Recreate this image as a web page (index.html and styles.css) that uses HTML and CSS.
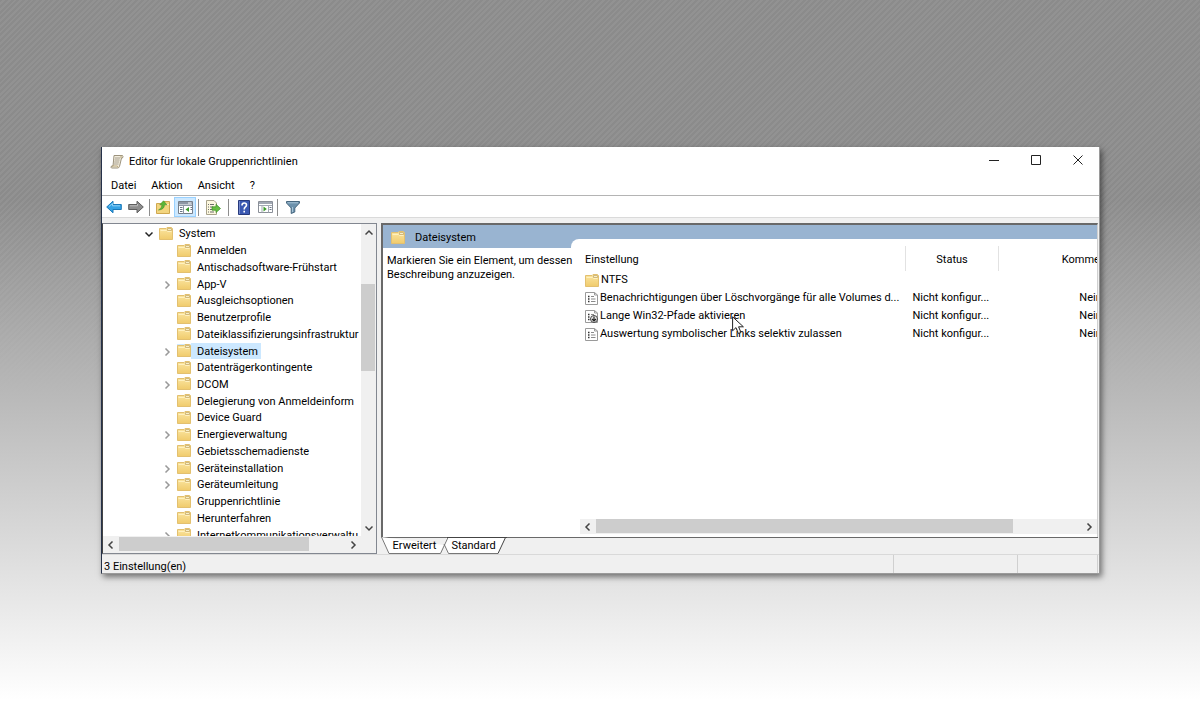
FILE: index.html
```html
<!DOCTYPE html>
<html lang="de">
    <head>
        <meta charset="UTF-8" />
        <title>Editor für lokale Gruppenrichtlinien</title>
        <link rel="stylesheet" href="styles.css">
    </head>

    <body>
        <svg class="defs" width="0" height="0" aria-hidden="true">
            <linearGradient id="folderFill" x1="0" y1="0" x2="0" y2="1">
                <stop offset="0" stop-color="#fbe6a2" />
                <stop offset="1" stop-color="#f0cb6c" />
            </linearGradient>
            <symbol id="folder" viewBox="0 0 14 13">
                <path d="M0.5 1.5H7L8 0.5H12.5L13.5 1.5V12.5H0.5Z" fill="url(#folderFill)" stroke="#e3c06f" />
                <path d="M8.5 3.5V1.5H12.5V3.5Z" fill="#f7efcb" stroke="#c9ad6c" stroke-width="0.8" />
                <path d="M1.5 3.5H7.5L8.5 4.5H12.5" fill="none" stroke="#fff1bf" />
            </symbol>
            <symbol id="setting" viewBox="0 0 13 13">
                <path d="M0.5 0.5H9.5L12.5 3V12.5H0.5Z" fill="#fff" stroke="#9a9a9a" />
                <path d="M9.5 0.5V3H12.5" fill="none" stroke="#9a9a9a" />
                <path d="M3 4.5H4.5M3 7H4.5M3 9.5H4.5" stroke="#333" stroke-width="1.3" />
                <path d="M6 4.5H9M6 7H10.5M6 9.5H10.5" stroke="#8a8a8a" />
            </symbol>
            <symbol id="chevron" viewBox="0 0 8 8">
                <path d="M2.5 0.5L6 4L2.5 7.5" fill="none" stroke="currentColor" stroke-width="1.5" />
            </symbol>
        </svg>

        <main class="window">
            <header class="titlebar">
                <svg class="app_icon" width="14" height="15" viewBox="0 0 14 15">
                    <path d="M4 1.5H12.5Q13.5 2 12.5 4H11.5L9.5 12.5Q9 14 7.5 14H1.5Q0.5 13.5 1.5 12H3Z" fill="#f3eddd" stroke="#9b927d" />
                    <path d="M5 4H10M4.6 6H9.6M4.2 8H9.2M3.8 10H8.6" stroke="#a59e8e" />
                    <path d="M2 12H7.5L8 13.5M11 1.5V4" fill="none" stroke="#b8a77c" />
                </svg>
                <h1>Editor für lokale Gruppenrichtlinien</h1>
                <button class="win_btn" aria-label="Minimieren"><svg width="10" height="10" viewBox="0 0 10 10"><path d="M0 5.5H10" /></svg></button>
                <button class="win_btn" aria-label="Maximieren"><svg width="10" height="10" viewBox="0 0 10 10"><path d="M0.5 0.5H9.5V9.5H0.5Z" /></svg></button>
                <button class="win_btn" aria-label="Schließen"><svg width="10" height="10" viewBox="0 0 10 10"><path d="M0.5 0.5L9.5 9.5M9.5 0.5L0.5 9.5" /></svg></button>
            </header>

            <nav class="menubar">
                <button>Datei</button>
                <button>Aktion</button>
                <button>Ansicht</button>
                <button>?</button>
            </nav>

            <div class="toolbar">
                <button aria-label="Zurück">
                    <svg width="16" height="14" viewBox="0 0 16 14"><path d="M0.7 7L7 1.2V4.5H15.3V9.5H7V12.8Z" fill="#35a2e4" stroke="#1b78b8" /><path d="M3 6.5L6.5 3.5V5.8H14" fill="none" stroke="#8fd2f7" /></svg>
                </button>
                <button aria-label="Vorwärts">
                    <svg width="16" height="14" viewBox="0 0 16 14"><path d="M15.3 7L9 1.2V4.5H0.7V9.5H9V12.8Z" fill="#8d8d8d" stroke="#5e5e5e" /><path d="M2 5.8H9.5V4" fill="none" stroke="#bdbdbd" /></svg>
                </button>
                <span class="divider"></span>
                <button aria-label="Eine Ebene nach oben">
                    <svg width="14" height="14" viewBox="0 0 14 14"><path d="M0.5 3.5H6L8 1.5H13.5V13.5H0.5Z" fill="#f3d57f" stroke="#cfa850" /><path d="M8.5 4.5H13" stroke="#fff0b8" /><path d="M2.5 10Q6 8.5 6 4.8H3.8L7.5 0.8L10.8 4.8H8.4Q8.5 9.5 2.5 10Z" fill="#5cb838" stroke="#3f8f25" stroke-width="0.6" /></svg>
                </button>
                <button class="on" aria-label="Konsolenstruktur anzeigen">
                    <svg width="15" height="13" viewBox="0 0 15 13"><path d="M0.5 0.5H14.5V12.5H0.5Z" fill="#fff" stroke="#777f8a" /><path d="M1 1H14V3.5H1Z" fill="#8d97a5" /><path d="M10 2H13.5" stroke="#fff" /><path d="M1 4.5H14M5.5 4V12.5" stroke="#8d97a5" /><path d="M2 6.5H4.5M2 8.5H4.5M2 10.5H4.5M12.5 6.5H14M12.5 8.5H14" stroke="#6b7686" /><path d="M7.5 8.5L11 6V11Z" fill="#3a9c2a" /></svg>
                </button>
                <span class="divider"></span>
                <button class="wide" aria-label="Liste exportieren">
                    <svg width="15" height="15" viewBox="0 0 15 15"><path d="M0.5 0.5H8L10.5 3V14.5H0.5Z" fill="#fdf8df" stroke="#a9a38b" /><path d="M2 4.5H3M4 4.5H8M2 7H3M4 7H7M2 9.5H3M4 9.5H7M2 12H3M4 12H8" stroke="#6d6d6d" /><path d="M6 6.8H10V4.3L14.5 8.5L10 12.5V10.2H6Z" fill="#67c043" stroke="#3a8c22" stroke-width="0.7" /></svg>
                </button>
                <span class="divider"></span>
                <button class="wide" aria-label="Hilfe">
                    <svg width="12" height="15" viewBox="0 0 12 15"><path d="M0.5 0.5H11.5V14.5H0.5Z" fill="#3a58b2" stroke="#26397c" /><path d="M1.5 1V14" stroke="#7288cd" /><path d="M4 5.5Q4 3 6.2 3Q8.5 3 8.5 5Q8.5 6.3 7.2 7.2Q6.2 8 6.2 9.4M6.2 10.8V12.4" fill="none" stroke="#fff" stroke-width="1.6" /></svg>
                </button>
                <button class="narrow" aria-label="Aktionsbereich anzeigen">
                    <svg width="15" height="12" viewBox="0 0 15 12"><path d="M0.5 0.5H14.5V11.5H0.5Z" fill="#fff" stroke="#8a8f98" /><path d="M1 1H14V3H1Z" fill="#a2a9b4" /><path d="M1 4.5H14M10.5 4V11.5M4 4V11.5" stroke="#a2a9b4" /><path d="M11.5 6.5H13.5M11.5 8.5H13.5" stroke="#6b7686" /><path d="M8.8 8L5.5 5.5V10.5Z" fill="#3a9c2a" /></svg>
                </button>
                <span class="divider"></span>
                <button class="wide" aria-label="Filter">
                    <svg width="14" height="13" viewBox="0 0 14 13"><path d="M0.5 0.5H13.5V2L8.8 7V11L5.2 12.5V7L0.5 2Z" fill="#6d92ad" stroke="#47677f" /><path d="M1.5 1.8H12" stroke="#a9c5d8" /><path d="M6.5 6V11" stroke="#a9c5d8" /></svg>
                </button>
            </div>

            <div class="panes">
                <section class="tree_pane" aria-label="Konsolenstruktur">
                    <div class="tree_view">
                        <ul class="tree">
                            <li class="root"><svg class="arrow open"><use href="#chevron" /></svg><svg class="folder"><use href="#folder" /></svg><span>System</span></li>
                            <li><svg class="folder"><use href="#folder" /></svg><span>Anmelden</span></li>
                            <li><svg class="folder"><use href="#folder" /></svg><span>Antischadsoftware-Frühstart</span></li>
                            <li><svg class="arrow"><use href="#chevron" /></svg><svg class="folder"><use href="#folder" /></svg><span>App-V</span></li>
                            <li><svg class="folder"><use href="#folder" /></svg><span>Ausgleichsoptionen</span></li>
                            <li><svg class="folder"><use href="#folder" /></svg><span>Benutzerprofile</span></li>
                            <li><svg class="folder"><use href="#folder" /></svg><span>Dateiklassifizierungsinfrastruktur</span></li>
                            <li class="on"><svg class="arrow"><use href="#chevron" /></svg><svg class="folder"><use href="#folder" /></svg><span>Dateisystem</span></li>
                            <li><svg class="folder"><use href="#folder" /></svg><span>Datenträgerkontingente</span></li>
                            <li><svg class="arrow"><use href="#chevron" /></svg><svg class="folder"><use href="#folder" /></svg><span>DCOM</span></li>
                            <li><svg class="folder"><use href="#folder" /></svg><span>Delegierung von Anmeldeinform</span></li>
                            <li><svg class="folder"><use href="#folder" /></svg><span>Device Guard</span></li>
                            <li><svg class="arrow"><use href="#chevron" /></svg><svg class="folder"><use href="#folder" /></svg><span>Energieverwaltung</span></li>
                            <li><svg class="folder"><use href="#folder" /></svg><span>Gebietsschemadienste</span></li>
                            <li><svg class="arrow"><use href="#chevron" /></svg><svg class="folder"><use href="#folder" /></svg><span>Geräteinstallation</span></li>
                            <li><svg class="arrow"><use href="#chevron" /></svg><svg class="folder"><use href="#folder" /></svg><span>Geräteumleitung</span></li>
                            <li><svg class="folder"><use href="#folder" /></svg><span>Gruppenrichtlinie</span></li>
                            <li><svg class="folder"><use href="#folder" /></svg><span>Herunterfahren</span></li>
                            <li><svg class="arrow"><use href="#chevron" /></svg><svg class="folder"><use href="#folder" /></svg><span>Internetkommunikationsverwaltu</span></li>
                        </ul>
                    </div>
                    <div class="vscroll">
                        <button aria-label="Nach oben"><svg class="arrow up"><use href="#chevron" /></svg></button>
                        <div class="track"><div class="thumb"></div></div>
                        <button aria-label="Nach unten"><svg class="arrow open"><use href="#chevron" /></svg></button>
                    </div>
                    <div class="hscroll">
                        <button aria-label="Nach links"><svg class="arrow left"><use href="#chevron" /></svg></button>
                        <div class="track"><div class="thumb"></div></div>
                        <button aria-label="Nach rechts"><svg class="arrow"><use href="#chevron" /></svg></button>
                    </div>
                </section>

                <section class="detail_pane">
                    <div class="detail">
                        <div class="banner"><svg class="folder"><use href="#folder" /></svg><h2>Dateisystem</h2></div>
                        <p class="desc">Markieren Sie ein Element, um dessen Beschreibung anzuzeigen.</p>
                        <div class="list">
                            <div class="list_view">
                                <table>
                                    <colgroup><col><col class="col_status"><col class="col_comment"></colgroup>
                                    <thead>
                                        <tr><th>Einstellung</th><th>Status</th><th>Kommentar</th></tr>
                                    </thead>
                                    <tbody>
                                        <tr><td><svg class="folder"><use href="#folder" /></svg>NTFS</td><td></td><td></td></tr>
                                        <tr><td><svg class="setting"><use href="#setting" /></svg>Benachrichtigungen über Löschvorgänge für alle Volumes d...</td><td>Nicht konfigur...</td><td>Nein</td></tr>
                                        <tr><td><svg class="setting"><use href="#setting" /><circle cx="9" cy="9" r="3.5" fill="#eee" stroke="#444" /><path d="M9 6.5V11M7 9L9 11L11 9" fill="none" stroke="#222" stroke-width="1.2" /></svg>Lange Win32-Pfade aktivieren</td><td>Nicht konfigur...</td><td>Nein</td></tr>
                                        <tr><td><svg class="setting"><use href="#setting" /></svg>Auswertung symbolischer Links selektiv zulassen</td><td>Nicht konfigur...</td><td>Nein</td></tr>
                                    </tbody>
                                </table>
                            </div>
                            <div class="hscroll">
                                <button aria-label="Nach links"><svg class="arrow left"><use href="#chevron" /></svg></button>
                                <div class="track"><div class="thumb"></div></div>
                                <button aria-label="Nach rechts"><svg class="arrow"><use href="#chevron" /></svg></button>
                            </div>
                        </div>
                    </div>
                    <div class="tabs">
                        <svg class="tab_lines" width="126" height="18" viewBox="0 0 126 18" aria-hidden="true">
                            <path d="M0 0L8 16.5H59L66 0.5H124L117 16.5H67L62 8Z" fill="#fff" />
                            <path d="M0.5 0L8 16.5H59.5L67 0.5M63 7L67.5 16.5H117" fill="none" stroke="#777" />
                            <path d="M66 0.5H126M117 16.5L124.5 0.5" fill="none" stroke="#444" />
                        </svg>
                        <button>Erweitert</button>
                        <button>Standard</button>
                    </div>
                </section>
            </div>

            <footer class="statusbar">
                <span>3 Einstellung(en)</span>
                <span></span>
                <span></span>
            </footer>

            <svg class="cursor" width="13" height="20" viewBox="0 0 13 20" aria-hidden="true">
                <path d="M0.6 0.8V14.8L4 11.6L6.4 17.6L9 16.5L6.6 10.8H11.4Z" fill="#fff" fill-opacity="0.8" stroke="#222" />
            </svg>
        </main>
    </body>
</html>
```

FILE: styles.css
```css
* {
    box-sizing: border-box;
    padding: 0;
    margin: 0;
}
body {
    min-height: 100vh;
    padding: 147px 100px 100px 101px;
    font: 11px/14px Roboto, "Open Sans", sans-serif;
    color: #000;
    background:
        linear-gradient(transparent 200px, #bababa 400px, #dedede 560px, #fff 700px),
        repeating-linear-gradient(135deg, #8b8b8b 0 2px, #929292 2px 4px);
}
button {
    border: 0;
    background: none;
    font: inherit;
    color: inherit;
    display: flex;
    align-items: center;
    justify-content: center;
}
h1,
h2,
th {
    font-size: 11px;
    font-weight: 400;
}
.defs {
    position: absolute;
}
.window {
    position: relative;
    border: 1px solid #9a9a9a;
    border-width: 0 1px 1px;
    border-left-color: #26324a;
    background-color: #f0f0f0;
    box-shadow: 2px 3px 6px rgba(0, 0, 0, 0.5);
}

/* title and menu */
.titlebar {
    display: flex;
    align-items: center;
    height: 28px;
    padding-left: 8px;
    background-color: #fff;
}
.titlebar h1 {
    flex: 1;
    padding: 1px 0 0 5px;
}
.win_btn {
    align-self: flex-start;
    width: 42px;
    height: 26px;
}
.win_btn path {
    fill: none;
    stroke: #222;
}
.menubar {
    display: flex;
    gap: 15px;
    height: 21px;
    padding: 1px 9px 0;
    background-color: #fff;
    border-bottom: 1px solid #b4b4b4;
}
.toolbar {
    display: flex;
    align-items: center;
    height: 22px;
    padding: 1px 0 0 1px;
    background-color: #fff;
    border-bottom: 1px solid #dadada;
}
.toolbar button {
    width: 22px;
    height: 20px;
}
.toolbar button.wide {
    width: 25px;
}
.toolbar button.narrow {
    width: 19px;
}
.toolbar button.on {
    background-color: #cce8ff;
    border: 1px solid #99d1ff;
}
.divider {
    width: 1px;
    height: 17px;
    margin: 0 2px;
    background-color: #8d8d8d;
}

/* panes */
.panes {
    display: flex;
    gap: 4px;
    padding: 5px 1px 0 0;
}
.folder {
    flex: none;
    width: 14px;
    height: 13px;
}
.arrow {
    width: 8px;
    height: 8px;
}
.arrow.open {
    transform: rotate(90deg);
}
.arrow.up {
    transform: rotate(-90deg);
}
.arrow.left {
    transform: rotate(180deg);
}
.tree_pane {
    display: grid;
    grid-template: 312px 17px / 1fr 15px;
    flex: none;
    width: 275px;
    border: 1px solid #828790;
    border-left-color: #444;
    background-color: #f0f0f0;
}
.tree_view {
    overflow: hidden;
    padding-top: 1px;
    background-color: #fff;
}
.tree {
    display: grid;
    grid-auto-rows: 1fr;
    height: 318px;
    list-style: none;
    white-space: nowrap;
}
.tree li {
    display: flex;
    align-items: center;
    justify-content: flex-start;
    padding-left: 74px;
}
.tree li .arrow {
    flex: none;
    margin: 2px 6px 0 -14px;
    color: #999;
}
.tree li.root {
    padding-left: 56px;
}
.tree li.root .arrow {
    color: #222;
}
.tree span {
    padding: 2px 3px 0 6px;
}
.tree li.on .folder,
.tree li.on span {
    background-color: #cce8ff;
}
.vscroll {
    display: flex;
    flex-direction: column;
    color: #444;
}
.vscroll button {
    height: 17px;
}
.track {
    flex: 1;
}
.thumb {
    background-color: #cdcdcd;
}
.vscroll .thumb {
    width: 14px;
    height: 87px;
    margin-top: 43px;
}
.hscroll {
    display: flex;
    height: 15px;
    background-color: #f0f0f0;
    color: #444;
}
.hscroll button {
    width: 16px;
}
.hscroll .thumb {
    height: 14px;
}
.tree_pane .hscroll {
    align-self: center;
}
.tree_pane .thumb {
    max-width: 190px;
}

/* details */
.detail_pane {
    flex: 1;
    min-width: 0;
}
.detail {
    display: grid;
    grid-template: 14px 9px 289px / 188px 1fr;
    border: 1px solid #d0d0d0;
    border-top: 2px solid #696969;
    border-left: 2px solid #696969;
    border-bottom: 0;
    background-color: #fff;
}
.banner {
    display: flex;
    grid-area: 1 / 1 / 3 / 3;
    align-items: center;
    padding: 2px 0 0 8px;
    background-color: #99b4d1;
}
.banner h2 {
    padding-left: 10px;
}
.desc {
    grid-area: 3 / 1;
    z-index: 1;
    margin-right: -6px;
    padding: 6px 0 0 4px;
}
.list {
    display: flex;
    flex-direction: column;
    grid-area: 2 / 2 / 4 / 3;
    min-width: 0;
    padding-bottom: 3px;
    border-radius: 8px 0 0;
    background-color: #fff;
}
.list_view {
    flex: 1;
    overflow: hidden;
    padding: 7px 0 0 14px;
}
.list .hscroll {
    margin-left: 9px;
}
.list .thumb {
    width: 86%;
}
table {
    width: calc(100% + 86px);
    table-layout: fixed;
    border-collapse: collapse;
    white-space: nowrap;
}
.col_status {
    width: 93px;
}
.col_comment {
    width: 184px;
}
th {
    height: 25px;
    padding-top: 2px;
    border-right: 1px solid #e2e2e2;
}
th:first-child {
    text-align: left;
}
td {
    height: 18px;
    padding-left: 7px;
}
td:first-child {
    padding-left: 0;
}
td:last-child {
    padding: 0;
    text-align: center;
}
td svg {
    margin-right: 2px;
    vertical-align: middle;
}
.setting {
    width: 13px;
    height: 13px;
}
.tabs {
    position: relative;
    display: flex;
    height: 17px;
    border-top: 1px solid #696969;
}
.tab_lines {
    position: absolute;
    left: 0;
    top: -1px;
}
.tabs button {
    position: relative;
    width: 59px;
    padding-left: 8px;
}

/* status */
.statusbar {
    display: flex;
    height: 19px;
    padding-right: 1px;
    border-top: 1px solid #d9d9d9;
}
.statusbar span {
    width: 124px;
    padding: 5px 0 0 2px;
    border-right: 1px solid #d0d0d0;
}
.statusbar span:first-child {
    flex: 1;
}
.statusbar span:last-child {
    width: 80px;
}
.cursor {
    position: absolute;
    left: 630px;
    top: 169px;
}
```
